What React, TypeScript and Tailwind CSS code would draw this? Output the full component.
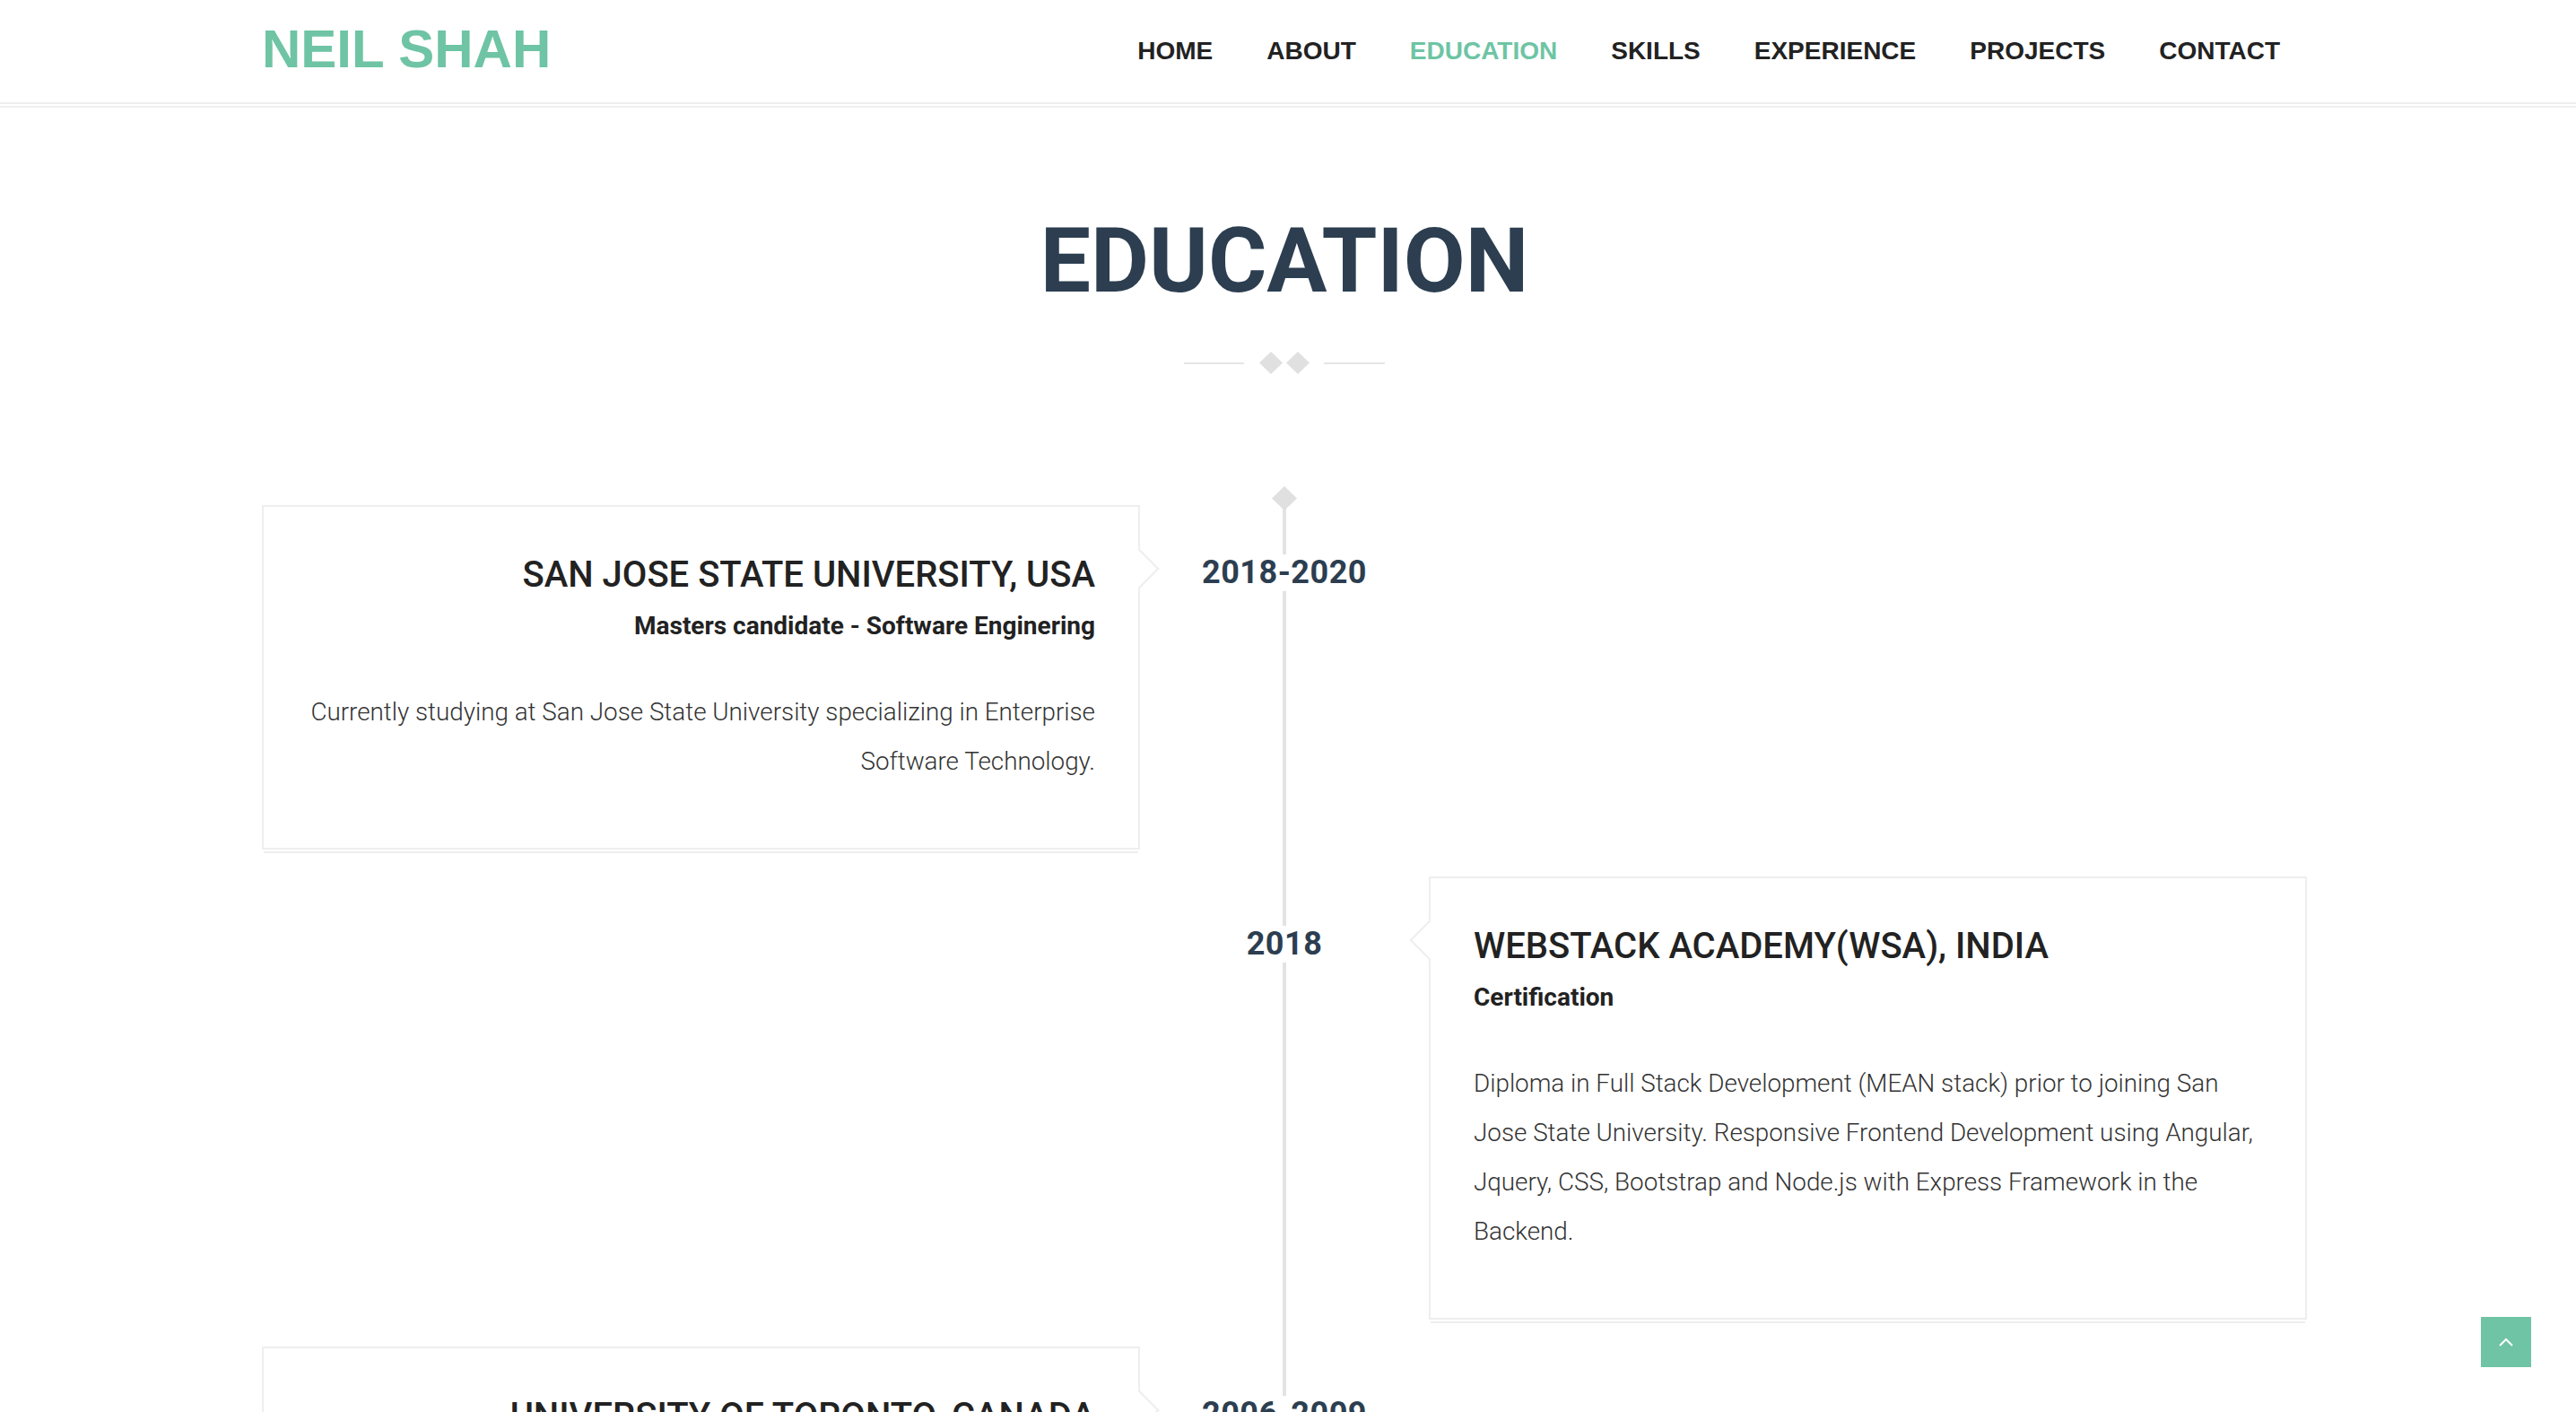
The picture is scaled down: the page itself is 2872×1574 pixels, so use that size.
import React from "react";

const navItems = ["HOME", "ABOUT", "EDUCATION", "SKILLS", "EXPERIENCE", "PROJECTS", "CONTACT"];

type Edu = {
  school: string;
  degree: string;
  years: string;
  text: string;
  side: "left" | "right";
};

const education: Edu[] = [
  {
    school: "SAN JOSE STATE UNIVERSITY, USA",
    degree: "Masters candidate - Software Enginering",
    years: "2018-2020",
    text: "Currently studying at San Jose State University specializing in Enterprise Software Technology.",
    side: "left",
  },
  {
    school: "WEBSTACK ACADEMY(WSA), INDIA",
    degree: "Certification",
    years: "2018",
    text: "Diploma in Full Stack Development (MEAN stack) prior to joining San Jose State University. Responsive Frontend Development using Angular, Jquery, CSS, Bootstrap and Node.js with Express Framework in the Backend.",
    side: "right",
  },
  {
    school: "UNIVERSITY OF TORONTO, CANADA",
    degree: "Bachelor of Science - Computer Science",
    years: "2006-2009",
    text: "Undergraduate studies in Computer Science with a focus on software design, data structures and web technologies.",
    side: "left",
  },
];

function EduCard({ item }: { item: Edu }) {
  const left = item.side === "left";
  return (
    <div
      className={
        left
          ? "relative bg-white border-2 border-[#eeeeee] px-[48px] pt-[52px] pb-[69px] text-right shadow-[0_2px_0_#fff,0_6px_0_-2px_#eeeeee]"
          : "relative bg-white border-2 border-[#eeeeee] px-[48px] pt-[52px] pb-[69px] text-left shadow-[0_2px_0_#fff,0_6px_0_-2px_#eeeeee]"
      }
    >
      {left ? (
        <span className="absolute top-[53px] -right-[17px] w-[32px] h-[32px] rotate-45 bg-white border-t-2 border-r-2 border-[#eeeeee]" />
      ) : (
        <span className="absolute top-[53px] -left-[17px] w-[32px] h-[32px] rotate-45 bg-white border-b-2 border-l-2 border-[#eeeeee]" />
      )}
      <h3 className="text-[40px] leading-[48px] font-medium text-[#222222]">{item.school}</h3>
      <h4 className="mt-[16px] text-[28px] leading-[34px] font-bold text-[#222222]">{item.degree}</h4>
      <p className="mt-[51px] text-[27.8px] leading-[55px] font-light text-[#333333]">{item.text}</p>
    </div>
  );
}

export default function App() {
  return (
    <div className="min-h-screen bg-white">
      {/* Header */}
      <header className="h-[116px] bg-white border-b-2 border-[#eeeeee] shadow-[0_2px_0_#fff,0_4px_0_#eeeeee] font-['Liberation_Sans',Arial,sans-serif]">
        <div className="ml-[292px] w-[2280px] h-full flex items-center justify-between">
          <div className="mb-[4px] text-[60px] leading-none font-bold text-[#6ec4a4]">NEIL SHAH</div>
          <nav className="flex">
            {navItems.map((n) => (
              <a
                key={n}
                href="#"
                className={
                  n === "EDUCATION"
                    ? "px-[30px] text-[28px] leading-none font-bold text-[#6ec4a4]"
                    : "px-[30px] text-[28px] leading-none font-bold text-[#222222]"
                }
              >
                {n}
              </a>
            ))}
          </nav>
        </div>
      </header>

      {/* Education */}
      <main className="ml-[292px] w-[2280px] pt-[125px] font-['Roboto',sans-serif]">
        <h2 className="text-center text-[100px] leading-none font-bold text-[#2c3e50]">EDUCATION</h2>

        <div className="mt-[51px] h-[25px] flex items-center justify-center">
          <span className="w-[67px] h-[2px] bg-[#e6e6e6]" />
          <span className="ml-[17px] w-[26px] h-[25px] bg-[#e0e0e0] [clip-path:polygon(50%_0,100%_50%,50%_100%,0_50%)]" />
          <span className="ml-[4px] w-[26px] h-[25px] bg-[#e0e0e0] [clip-path:polygon(50%_0,100%_50%,50%_100%,0_50%)]" />
          <span className="ml-[16px] w-[68px] h-[2px] bg-[#e6e6e6]" />
        </div>

        <div className="mt-[125px]">
          {education.map((item, idx) => (
            <div key={idx} className="grid grid-cols-[979px_322px_979px]">
              <div className={idx === 0 ? "pt-[21px] pb-[30px]" : "pb-[30px]"}>
                {item.side === "left" && <EduCard item={item} />}
              </div>
              {idx === 0 ? (
                <div className="flex flex-col items-center bg-[linear-gradient(#e3e3e3,#e3e3e3)] bg-no-repeat bg-bottom bg-[length:4px_calc(100%-14px)]">
                  <span className="w-[28px] h-[27px] bg-[#e0e0e0] [clip-path:polygon(50%_0,100%_50%,50%_100%,0_50%)]" />
                  <span className="mt-[49px] bg-white px-[4px] text-[36px] leading-[41px] font-bold tracking-[0.5px] text-[#2c3e50]">
                    {item.years}
                  </span>
                </div>
              ) : (
                <div className="flex flex-col items-center bg-[linear-gradient(#e3e3e3,#e3e3e3)] bg-no-repeat bg-center bg-[length:4px_100%]">
                  <span className="mt-[55px] bg-white px-[4px] text-[36px] leading-[41px] font-bold tracking-[0.5px] text-[#2c3e50]">
                    {item.years}
                  </span>
                </div>
              )}
              <div className={idx === 0 ? "pt-[21px] pb-[30px]" : "pb-[30px]"}>
                {item.side === "right" && <EduCard item={item} />}
              </div>
            </div>
          ))}
        </div>
      </main>

      {/* Back to top */}
      <a
        href="#"
        className="fixed right-[50px] bottom-[50px] w-[56px] h-[56px] bg-[#6ec4a4] flex items-center justify-center"
      >
        <svg width="16" height="10" viewBox="0 0 16 10" fill="none">
          <polyline points="1,9 8,2 15,9" stroke="#ffffff" strokeWidth="2" />
        </svg>
      </a>
    </div>
  );
}
